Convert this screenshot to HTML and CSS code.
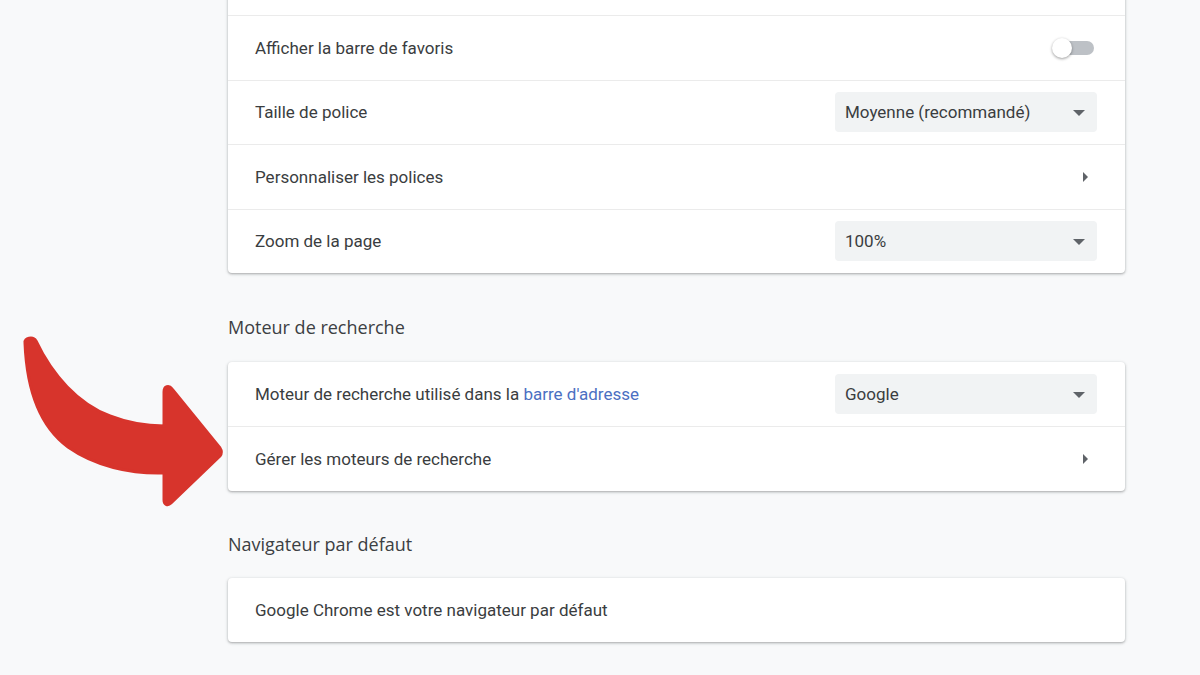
FILE: index.html
```html
<!DOCTYPE html>
<html lang="fr">
<head>
<meta charset="utf-8">
<title>Paramètres</title>
<link rel="stylesheet" href="styles.css">
</head>
<body>
<main class="page">
  <section class="card card-first">
    <div class="row"></div>
    <div class="row">
      <span class="label">Afficher la barre de favoris</span>
      <span class="toggle"><span class="track"></span><span class="knob"></span></span>
    </div>
    <div class="row">
      <span class="label">Taille de police</span>
      <div class="select"><span>Moyenne (recommandé)</span><span class="caret"></span></div>
    </div>
    <div class="row">
      <span class="label">Personnaliser les polices</span>
      <span class="sub-arrow"></span>
    </div>
    <div class="row">
      <span class="label">Zoom de la page</span>
      <div class="select"><span>100%</span><span class="caret"></span></div>
    </div>
  </section>

  <h2 class="section-title">Moteur de recherche</h2>
  <section class="card">
    <div class="row">
      <span class="label">Moteur de recherche utilisé dans la <a class="link" href="#">barre d'adresse</a></span>
      <div class="select"><span>Google</span><span class="caret"></span></div>
    </div>
    <div class="row">
      <span class="label">Gérer les moteurs de recherche</span>
      <span class="sub-arrow"></span>
    </div>
  </section>

  <h2 class="section-title section-title-tight">Navigateur par défaut</h2>
  <section class="card">
    <div class="row">
      <span class="label">Google Chrome est votre navigateur par défaut</span>
    </div>
  </section>
</main>

<svg class="red-arrow" width="240" height="200" viewBox="0 320 240 200" aria-hidden="true">
  <path fill="#d7342c" stroke="#d7342c" stroke-width="3" stroke-linejoin="round"
    d="M25 343
       C 24 338, 33 336, 36 341
       C 52 375, 78 404, 110 416
       C 128 423, 146 426, 164 426
       L 164 392
       C 164 386, 169 385, 172 389
       L 220 448
       C 222 451, 222 453, 220 456
       L 171 503
       C 168 506, 164 505, 164 500
       L 164 473
       C 130 474, 95 466, 68 447
       C 42 428, 27 395, 25 343 Z"/>
</svg>
</body>
</html>
```

FILE: styles.css
```css
html, body {
  margin: 0;
  padding: 0;
}
body {
  background: #f8f9fa;
  font-family: Roboto, "Liberation Sans", Arial, sans-serif;
  color: #3c4043;
  width: 1200px;
  height: 675px;
  overflow: hidden;
  position: relative;
}
.page {
  margin-left: 228px;
  width: 897px;
}
.card {
  background: #fff;
  border-radius: 4px;
  box-shadow: 0 1px 2px rgba(60, 64, 67, 0.3), 0 1px 3px 1px rgba(60, 64, 67, 0.12);
}
.card-first {
  margin-top: -49px;
  border-radius: 0 0 4px 4px;
}
.row {
  height: 64px;
  display: flex;
  align-items: center;
  justify-content: space-between;
  padding: 0 28px 0 27px;
  box-sizing: border-box;
}
.row + .row {
  height: 64.5px;
  border-top: 1px solid #ebebeb;
}
.label {
  font-size: 17px;
  color: #3a3d40;
}
.link {
  color: #4b6fc2;
  text-decoration: none;
}
.select {
  width: 262px;
  height: 40px;
  background: #f1f3f4;
  border-radius: 4px;
  display: flex;
  align-items: center;
  justify-content: space-between;
  padding: 0 12px 0 10px;
  box-sizing: border-box;
  font-size: 17px;
  color: #3a3d40;
}
.caret {
  width: 0;
  height: 0;
  border-left: 6px solid transparent;
  border-right: 6px solid transparent;
  border-top: 6px solid #5f6368;
  margin-top: 2px;
}
.sub-arrow {
  width: 0;
  height: 0;
  border-top: 5px solid transparent;
  border-bottom: 5px solid transparent;
  border-left: 5px solid #5f6368;
  margin-right: 9px;
}
.toggle {
  position: relative;
  width: 42px;
  height: 20px;
  margin-right: 3px;
}
.track {
  position: absolute;
  left: 6px;
  right: 0;
  top: 3px;
  height: 14px;
  border-radius: 7px;
  background: #bdc1c6;
}
.knob {
  position: absolute;
  left: 0;
  top: 0;
  width: 20px;
  height: 20px;
  border-radius: 50%;
  background: #fff;
  box-shadow: 0 1px 3px rgba(0, 0, 0, 0.4);
}
.section-title {
  margin: 42px 0 23px 0;
  font-family: "Open Sans", Roboto, sans-serif;
  font-weight: 400;
  font-size: 18px;
  line-height: 24px;
  color: #3c4043;
}
.section-title-tight {
  margin-top: 41px;
  margin-bottom: 22px;
}
.red-arrow {
  position: absolute;
  left: 0;
  top: 320px;
}
```
